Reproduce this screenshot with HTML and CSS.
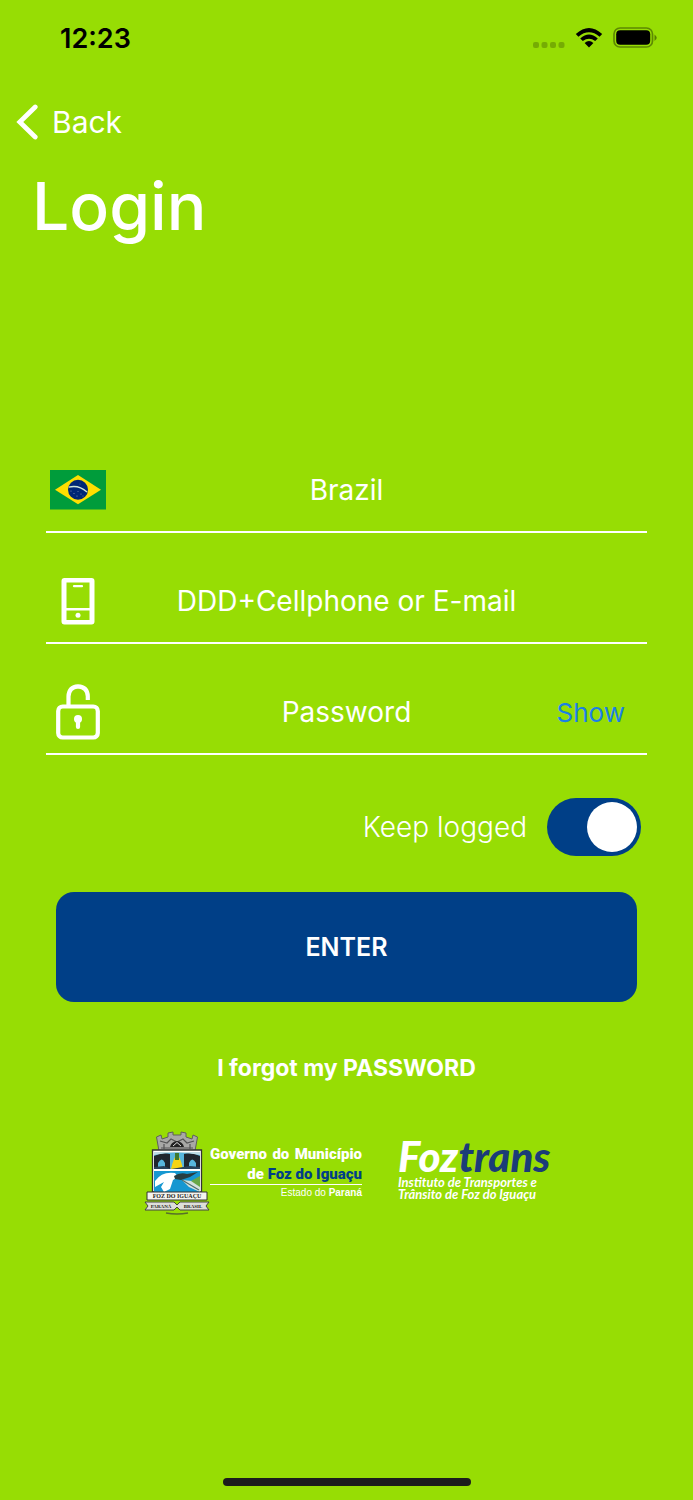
FILE: index.html
```html
<!DOCTYPE html>
<html lang="en">
<head>
<meta charset="utf-8">
<meta name="viewport" content="width=device-width, initial-scale=1">
<title>Login</title>
<link rel="stylesheet" href="styles.css">
</head>
<body>
<div class="screen">
  <header class="status">
    <time class="clock">12:23</time>
    <div class="indicators">
      <svg width="32" height="22" viewBox="0 0 32 22" aria-hidden="true"><g fill="#000" fill-opacity=".22"><rect x="0" y="15" width="6" height="6" rx="2"/><rect x="8.500" y="15" width="6" height="6" rx="2"/><rect x="17" y="15" width="6" height="6" rx="2"/><rect x="25.500" y="15" width="6" height="6" rx="2"/></g></svg>
      <svg width="28" height="22" viewBox="0 0 28 22" aria-hidden="true"><path d="M.8 7.100Q14-4.900 27.200 7.100L24.600 9.700Q14 .9 3.400 9.700ZM5.200 11.500Q14 3.600 22.800 11.500L20.200 14.100Q14 9.300 7.800 14.100ZM9.600 16Q14 12 18.400 16L14 20.600Z"/></svg>
      <svg width="44" height="22" viewBox="0 0 44 22" aria-hidden="true"><rect x="1" y="1" width="38.500" height="19" rx="6" fill="none" stroke="#000" stroke-opacity=".38" stroke-width="1.700"/><rect x="3.200" y="3.200" width="34" height="14.600" rx="4"/><path d="M41.500 7.500Q46 10.800 41.500 14Z" fill-opacity=".42"/></svg>
    </div>
  </header>

  <nav class="nav">
    <a class="back" href="#">
      <svg width="22" height="36" viewBox="0 0 22 36" aria-hidden="true"><path d="M19.200 3 3.800 18 19.200 33" fill="none" stroke="#fff" stroke-width="4.800" stroke-linecap="round" stroke-linejoin="miter"/></svg>
      <span>Back</span>
    </a>
  </nav>

  <h1 class="title">Login</h1>

  <form class="form">
    <div class="field">
      <span class="icon">
        <svg width="56" height="40" viewBox="0 0 56 40" aria-hidden="true"><rect width="56" height="39.500" fill="#009c3b"/><path d="M5 19.700 28 5 51 19.700 28 34.300Z" fill="#ffdf00"/><circle cx="28" cy="19.700" r="10" fill="#002776"/><path d="M18.700 17.200Q28.500 14.500 37 22" fill="none" stroke="#cfe6d8" stroke-width="1.400"/><g fill="#7c8fbd"><circle cx="21" cy="21" r=".6"/><circle cx="24" cy="23.500" r=".6"/><circle cx="28" cy="21.500" r=".5"/><circle cx="27" cy="26" r=".6"/><circle cx="31" cy="24" r=".6"/><circle cx="33" cy="26" r=".5"/><circle cx="30" cy="14" r=".4"/></g></svg>
      </span>
      <select class="control" aria-label="Country"><option>Brazil</option></select>
    </div>
    <div class="field">
      <span class="icon">
        <svg width="34" height="48" viewBox="0 0 34 48" aria-hidden="true"><path fill="#fff" fill-rule="evenodd" d="M3.500 1H30.500Q33.500 1 33.500 4V44.500Q33.500 47.500 30.500 47.500H3.500Q.5 47.500 .5 44.500V4Q.5 1 3.500 1ZM5.500 5.500V31H28.500V5.500ZM5.500 33.500V43H28.500V33.500Z"/><path d="M13 9.200H21" stroke="#fff" stroke-width="2.200" stroke-linecap="round"/><circle cx="17" cy="38.200" r="2.500" fill="#fff"/></svg>
      </span>
      <input class="control" type="text" placeholder="DDD+Cellphone or E-mail" aria-label="DDD+Cellphone or E-mail">
    </div>
    <div class="field">
      <span class="icon">
        <svg width="44" height="56" viewBox="0 0 44 56" aria-hidden="true"><g fill="none" stroke="#fff" stroke-width="4.200"><rect x="2.200" y="22.500" width="39.600" height="31" rx="4.500"/><path d="M12.500 22V12.300Q13 2.800 22 2.300 31.500 2.800 31.800 12.300V16"/></g><circle cx="22" cy="35" r="4" fill="#fff"/><path d="M22 36V43" stroke="#fff" stroke-width="4.200" stroke-linecap="round"/></svg>
      </span>
      <input class="control" type="password" placeholder="Password" aria-label="Password">
      <button class="show" type="button">Show</button>
    </div>

    <label class="keep">
      <span>Keep logged</span>
      <input class="switch" type="checkbox" role="switch" checked>
    </label>

    <button class="enter" type="submit">ENTER</button>
  </form>

  <a class="forgot" href="#">I forgot my PASSWORD</a>

  <footer class="logos">
    <div class="city">
      <svg width="66" height="86" viewBox="0 0 66 86" role="img" aria-label="Foz do Iguaçu coat of arms">
        <path d="M12.500 6 17 4 18 8 24 6V2L29 1V4H37V1L42 2V6L48 8 49 4 53.500 6 51 20H15Z" fill="#a8a8a6" stroke="#5e5e5e"/>
        <path d="M16 10 23 12 27 8 33 11 39 8 43 12 50 10M17 17H49M20 13V18M46 13V18" fill="none" stroke="#555" stroke-width="1.200"/>
        <path d="M26 16Q27 11 33 10 39 11 40 16Z" fill="#222"/><path d="M29 15 33 11.500 37 15" fill="none" stroke="#ddd"/>
        <path d="M8.500 19H57.500V61H8.500Z" fill="#fff" stroke="#333" stroke-width="1.300"/>
        <path d="M10 21H56V38H10Z" fill="#58b5dc"/>
        <path d="M10 25Q18 21 26 23V38H21V32Q18 25 14 32V38H10ZM56 25Q48 21 40 23V38H45V32Q48 25 52 32V38H56Z" fill="#20262e"/>
        <path d="M10 24Q33 19 56 24V21H10Z" fill="#bfdbe4"/>
        <path d="M27 38Q29 28 33 23 37 28 39 38Z" fill="#f5d414"/><path d="M31 22H35V29H31Z" fill="#40792d"/>
        <path d="M10 36 20 35 27 38 39 36 46 35 56 36V38H10Z" fill="#28425a"/>
        <path d="M10 40H56V61H10Z" fill="#1697d1"/>
        <path d="M11 50Q18 40 31 42L34 46 29 49 26 58 20 61 17 56 20 51 11 56Z" fill="#fff"/>
        <path d="M38 49 48 50 56 46V61L45 56Z" fill="#d3e3df"/><path d="M47 50 56 45V56Z" fill="#67a747"/>
        <path d="M30 45Q36 41 43 43L54 41 46 46 37 49 31 48Z" fill="#273e42"/><path d="M38 49 55 59" fill="none" stroke="#4d6e6c" stroke-width="1.200"/>
        <path d="M3 61H63V69H3Z" fill="#f4f4ef" stroke="#333"/>
        <path d="M1 71H30L33 74 36 71H65L62 75 65 79H36L33 76 30 79H1L4 75Z" fill="#dedfd9" stroke="#444"/>
        <path d="M22 82Q33 84 44 82" fill="none" stroke="#58702a" stroke-width="1.500"/>
        <text class="seal" x="33" y="67" text-anchor="middle" font-size="6">FOZ DO IGUAÇU</text>
        <text class="seal" x="17" y="77" text-anchor="middle" font-size="5">PARANÁ</text>
        <text class="seal" x="49" y="77" text-anchor="middle" font-size="5">BRASIL</text>
      </svg>
      <div class="city-name">
        <p class="gov gov-top"><span>Governo</span><span>do</span><span>Município</span></p>
        <p class="gov">de <b>Foz do Iguaçu</b></p>
        <p class="state">Estado do <b>Paraná</b></p>
      </div>
    </div>
    <div class="foztrans">
      <p class="brand">Foz<span>trans</span></p>
      <p class="tagline">Instituto de Transportes e<br>Trânsito de Foz do Iguaçu</p>
    </div>
  </footer>

  <div class="home"></div>
</div>
</body>
</html>
```
FILE: styles.css
```css
* { box-sizing: border-box; }
body {
  margin: 0;
  background: #97dd04;
  color: #fff;
  font-family: Inter, "Liberation Sans", sans-serif;
}
h1, p { margin: 0; font-weight: 400; }
a { color: inherit; text-decoration: none; }
svg { display: block; flex: none; }
.screen {
  min-height: 100vh;
  display: flex;
  flex-direction: column;
}
.status {
  height: 76px;
  padding: 0 36px 0 60px;
  display: flex;
  align-items: center;
  justify-content: space-between;
  color: #000;
}
.clock { font-size: 27px; font-weight: 600; }
.indicators { display: flex; align-items: center; gap: 10px; }
.nav { padding: 24px 16px 0; }
.back {
  display: inline-flex;
  align-items: center;
  gap: 14px;
  height: 44px;
  font-size: 30px;
}
.title {
  padding: 22px 32px 0;
  font-size: 66px;
  line-height: 80px;
  font-weight: 500;
}
.form {
  padding: 203px 46px 0;
  display: flex;
  flex-direction: column;
  gap: 27px;
}
.field {
  height: 84px;
  display: grid;
  grid-template-columns: 64px 1fr 64px;
  align-items: center;
  border-bottom: 2px solid #fff;
}
.icon { display: flex; justify-content: center; }
.control {
  width: 100%;
  height: 48px;
  padding: 0;
  border: 0;
  outline: 0;
  appearance: none;
  background: transparent;
  color: #fff;
  font: 400 28px Inter, "Liberation Sans", sans-serif;
  text-align: center;
  text-align-last: center;
}
.control::placeholder { color: #fff; opacity: 1; }
.show {
  justify-self: end;
  margin-right: 22px;
  padding: 0;
  border: 0;
  background: none;
  color: #1b80e4;
  font: 400 26px Inter, "Liberation Sans", sans-serif;
}
.keep {
  margin-top: 16px;
  padding-right: 6px;
  display: flex;
  justify-content: flex-end;
  align-items: center;
  gap: 20px;
  font-size: 28px;
  font-weight: 300;
}
.switch {
  appearance: none;
  width: 94px;
  height: 58px;
  margin: 0;
  padding: 4px;
  border-radius: 29px;
  background: #003f87;
  display: flex;
  justify-content: flex-end;
}
.switch::before {
  content: "";
  width: 50px;
  height: 50px;
  border-radius: 50%;
  background: #fff;
}
.switch:not(:checked) { justify-content: flex-start; background: #78a80e; }
.enter {
  height: 110px;
  margin: 9px 10px 0;
  border: 0;
  border-radius: 18px;
  background: #003f87;
  color: #fff;
  font: 600 25px Inter, "Liberation Sans", sans-serif;
}
.forgot {
  align-self: center;
  margin-top: 50px;
  font-size: 23px;
  line-height: 32px;
  font-weight: 700;
}
.logos {
  margin-top: 47px;
  display: flex;
  justify-content: center;
  gap: 36px;
}
.city { display: flex; }
.seal { font-family: "Liberation Serif", serif; font-weight: 700; fill: #222; }
.city-name { width: 152px; padding-top: 13px; text-align: right; }
.gov {
  font-family: Roboto, sans-serif;
  font-size: 15px;
  line-height: 20px;
  font-weight: 900;
  white-space: nowrap;
}
.gov-top { display: flex; justify-content: space-between; }
.gov b { font-weight: 900; color: #003f87; }
.state {
  border-top: 1px solid #fff;
  font-family: "Liberation Sans", sans-serif;
  font-size: 10px;
  line-height: 16px;
}
.foztrans { width: 151px; font-family: Lato, sans-serif; font-style: italic; white-space: nowrap; }
.brand {
  padding-top: 5px;
  font-size: 42px;
  line-height: 40px;
  font-weight: 900;
}
.brand span { color: #1b3c78; }
.tagline { font-size: 13px; line-height: 12px; font-weight: 700; }
.home {
  width: 248px;
  height: 8px;
  margin: auto auto 14px;
  border-radius: 4px;
  background: #1c1c1c;
}
```
